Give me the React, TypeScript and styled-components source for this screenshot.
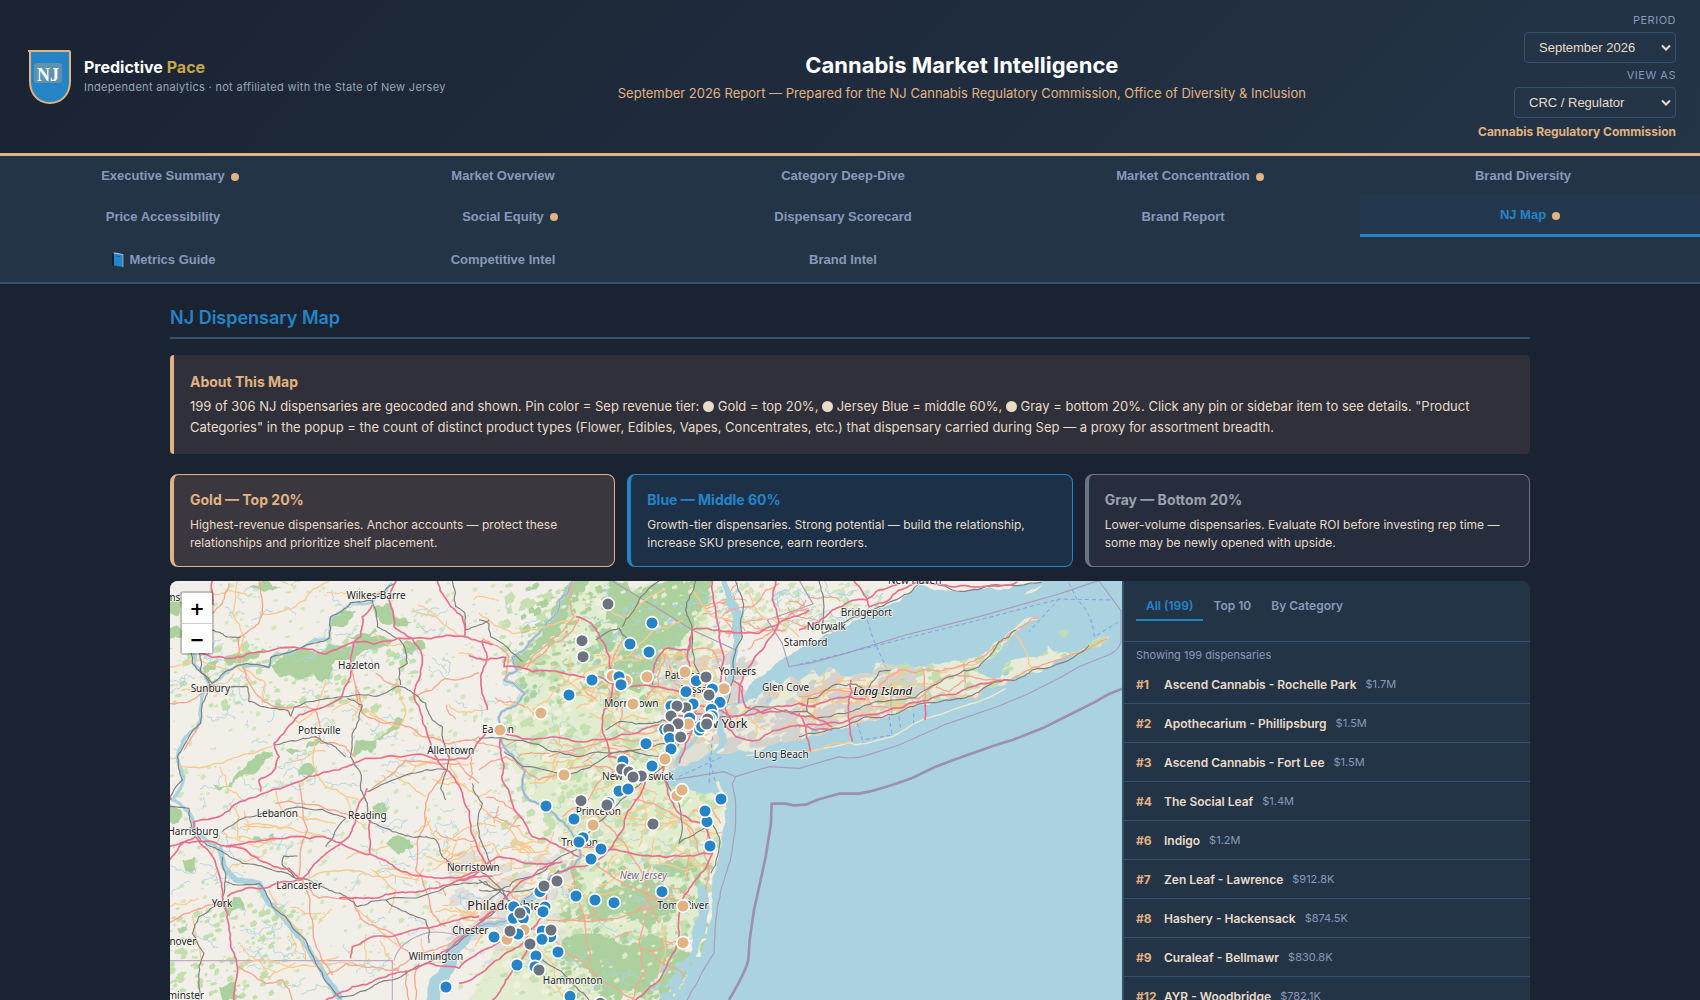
import React, { useState } from "react";
import styled, { createGlobalStyle } from "styled-components";

const c = {
  bg: "#1a2332",
  panel: "#243447",
  line: "#33526f",
  gold: "#e1b382",
  blue: "#2484c6",
  muted: "#8899b8",
  cream: "#e8dcc8",
  gray: "#6b7280",
};
const sans = `Inter, "Liberation Sans", sans-serif`;
const arial = `"Liberation Sans", Arial, sans-serif`;

const Global = createGlobalStyle`
  * { box-sizing: border-box; }
  body { margin: 0; background: ${c.bg}; color: ${c.cream}; font-family: ${sans}; }
  h1, h2, h3, p, ul { margin: 0; padding: 0; }
  button { border: 0; cursor: pointer; }
`;

const Page = styled.div`
  display: flex;
  flex-direction: column;
  height: 100vh;
  overflow: hidden;
`;

const Header = styled.header`
  display: flex;
  align-items: center;
  justify-content: space-between;
  padding: 12px 24px;
  border-bottom: 3px solid ${c.gold};
  background: linear-gradient(135deg, ${c.bg} 0%, ${c.panel} 100%);
`;
const Brand = styled.div`
  display: flex;
  align-items: center;
  gap: 12px;
`;
const BrandText = styled.div`
  padding-bottom: 2px;
`;
const Shield = styled.svg`
  width: 48px;
  height: 56px;
`;
const BrandName = styled.div`
  font-size: 16px;
  line-height: 22px;
  font-weight: 700;
  color: #fff;
  span { color: #c9a548; }
`;
const BrandNote = styled.div`
  font-size: 11px;
  line-height: 18px;
  letter-spacing: 0.3px;
  color: #9aa5b5;
`;
const Titles = styled.div`
  text-align: center;
`;
const Title = styled.h1`
  font-size: 22px;
  line-height: 32px;
  font-weight: 700;
  color: #fff;
`;
const Subtitle = styled.p`
  font-size: 13px;
  line-height: 24px;
  color: ${c.gold};
`;
const Filters = styled.div`
  display: flex;
  flex-direction: column;
  align-items: flex-end;
  gap: 4px;
`;
const FilterLabel = styled.label`
  font-size: 11px;
  line-height: 16px;
  letter-spacing: 0.5px;
  text-transform: uppercase;
  color: ${c.muted};
`;
const Select = styled.select`
  height: 31px;
  padding: 0 28px 0 14px;
  border: 1px solid ${c.line};
  border-radius: 4px;
  background: ${c.panel}
    url("data:image/svg+xml,%3Csvg xmlns='http://www.w3.org/2000/svg' width='10' height='8'%3E%3Cpath d='M1 1.5l4 4 4-4' fill='none' stroke='%23e8dcc8' stroke-width='2'/%3E%3C/svg%3E")
    no-repeat right 4px center;
  appearance: none;
  color: ${c.cream};
  font: 13px ${arial};
`;
const PeriodSelect = styled(Select)`
  width: 152px;
`;
const ViewSelect = styled(Select)`
  width: 162px;
`;
const Agency = styled.div`
  font-size: 12px;
  line-height: 19px;
  font-weight: 700;
  color: ${c.gold};
`;

const Nav = styled.nav`
  display: grid;
  grid-template-columns: repeat(5, 1fr);
  grid-template-rows: 39px 42px 45px;
  background: ${c.panel};
  border-bottom: 2px solid ${c.line};
`;
const NavTab = styled.button<{ $active?: boolean }>`
  display: flex;
  align-items: center;
  justify-content: center;
  gap: 6px;
  font: 700 13px ${arial};
  color: ${(p) => (p.$active ? c.blue : c.muted)};
  background: ${(p) => (p.$active ? "#23384f" : "transparent")};
  border-bottom: ${(p) => (p.$active ? `3px solid ${c.blue}` : "0")};
`;
const Dot = styled.i<{ $on: boolean }>`
  width: 8px;
  height: 8px;
  margin-top: 2px;
  border-radius: 50%;
  background: ${(p) => (p.$on ? c.gold : "transparent")};
`;

const Main = styled.main`
  flex: 1;
  min-height: 0;
  display: flex;
  flex-direction: column;
  width: 80%;
  margin: 0 auto;
  padding-top: 20px;
`;
const Heading = styled.h2`
  padding-bottom: 5px;
  border-bottom: 2px solid ${c.line};
  font-size: 18px;
  line-height: 28px;
  font-weight: 600;
  color: ${c.blue};
`;
const About = styled.section`
  margin-top: 16px;
  padding: 16px 20px 16px 16px;
  border-left: 4px solid ${c.gold};
  border-radius: 4px;
  background: #2f303a;
`;
const AboutText = styled.p`
  font-size: 13px;
  line-height: 21px;
  padding-top: 3px;
`;
const Disc = styled.i`
  display: inline-block;
  width: 11px;
  height: 11px;
  border-radius: 50%;
  vertical-align: -1px;
  background: ${c.cream};
`;
const CardTitle = styled.h3<{ $color: string }>`
  font-size: 14px;
  line-height: 22px;
  font-weight: 700;
  color: ${(p) => p.$color};
`;
const Tiers = styled.div`
  display: grid;
  grid-template-columns: repeat(3, 1fr);
  gap: 12px;
  margin: 20px 0 14px;
`;
const Tier = styled.section<{ $color: string; $bg: string }>`
  padding: 14px 16px;
  border: 1px solid ${(p) => p.$color};
  border-left-width: 4px;
  border-radius: 8px;
  background: ${(p) => p.$bg};
`;
const TierText = styled.p`
  padding-top: 5px;
  font-size: 12px;
  line-height: 18px;
`;

const MapCard = styled.div`
  flex: 1;
  min-height: 0;
  display: grid;
  grid-template-columns: 7fr 3fr;
  grid-template-rows: 100%;
  border-radius: 8px 8px 0 0;
  overflow: hidden;
`;
const MapPane = styled.div`
  position: relative;
  background: #aad3df;
`;
const MapSvg = styled.svg`
  display: block;
  width: 100%;
  height: 100%;
`;
const Zoom = styled.div`
  position: absolute;
  top: 10px;
  left: 10px;
  border: 2px solid rgba(0, 0, 0, 0.2);
  border-radius: 4px;
`;
const ZoomButton = styled.button`
  display: block;
  width: 30px;
  height: 30px;
  padding: 2px 0 0;
  background: #fff;
  color: #000;
  font: 700 18px/28px "DejaVu Sans", sans-serif;
  & + & { border-top: 1px solid #ccc; }
`;

const Side = styled.aside`
  border-left: 2px solid ${c.line};
  background: ${c.panel};
  overflow: hidden;
`;
const SideTabs = styled.div`
  display: flex;
  height: 61px;
  padding: 10px 12px 20px;
  border-bottom: 1px solid ${c.line};
`;
const SideTab = styled.button<{ $active?: boolean }>`
  padding: 0 10px;
  background: none;
  font: 600 12px ${sans};
  color: ${(p) => (p.$active ? c.blue : c.muted)};
  border-bottom: 2px solid ${(p) => (p.$active ? c.blue : "transparent")};
`;
const Count = styled.p`
  padding: 4px 12px 1px;
  font-size: 11px;
  line-height: 18px;
  color: ${c.muted};
`;
const List = styled.ul`
  list-style: none;
`;
const Item = styled.li`
  display: flex;
  align-items: center;
  height: 39px;
  padding: 0 12px;
  border-bottom: 1px solid ${c.line};
  font-size: 12px;
  font-weight: 600;
`;
const Rank = styled.span`
  min-width: 28px;
  font-weight: 700;
  color: ${c.gold};
`;
const Revenue = styled.span`
  margin-left: 9px;
  font-size: 11px;
  font-weight: 400;
  color: ${c.muted};
`;

/* ---------- map geometry ---------- */
type Pt = [number, number];

const random = (seed: number) => () => {
  seed = (seed * 16807) % 2147483647;
  return seed / 2147483647;
};

const parse = (s: string, dx = 0): Pt[] =>
  s.trim().split(/\s+/).map((p) => {
    const [x, y] = p.split(",").map(Number);
    return [x + dx, y];
  });

// Subdivides a polyline and nudges every new vertex so it reads as a surveyed line.
const rough = (pts: Pt[], seed: number, amp = 0.12, depth = 3): string => {
  const r = random(seed * 7919 + 13);
  let cur = pts;
  for (let d = 0; d < depth; d++) {
    const next: Pt[] = [cur[0]];
    for (let i = 1; i < cur.length; i++) {
      const [ax, ay] = cur[i - 1];
      const [bx, by] = cur[i];
      const k = (r() - 0.5) * 2 * amp;
      if (Math.hypot(bx - ax, by - ay) > 8)
        next.push([(ax + bx) / 2 - (by - ay) * k, (ay + by) / 2 + (bx - ax) * k]);
      next.push([bx, by]);
    }
    cur = next;
  }
  return "M" + cur.map(([x, y]) => `${Math.round(x)} ${Math.round(y)}`).join("L");
};

const W = -960; // western sheet offset
const E = 960; // eastern sheet offset

const coast =
  "1926,-20 1700,20 1690,40 1615,45 1560,60 1500,56 1460,66 1415,62 1360,58 1320,45 1290,70 1260,95 1200,115 1150,140 1110,165 1070,185 1020,208 990,225 960,238 930,258 900,272 880,292 850,318 812,345 798,372 775,395 745,402 728,430 715,480 720,520 700,548 650,560 600,590 565,615 552,632 590,655 640,662 700,668 728,690 738,720 730,790 718,860 700,925 700,1000 692,1060 680,1110 665,1160 622,1220 590,1290";
const sea = "L560 1600L2400 1600L2400 -20Z";
const longIsland =
  "728,445 750,405 790,400 835,385 862,355 880,330 905,345 935,318 960,335 1000,298 1020,322 1050,290 1085,318 1130,312 1180,315 1190,278 1260,285 1360,280 1400,276 1460,272 1505,255 1550,215 1600,180 1660,142 1680,146 1620,180 1582,215 1560,245 1495,290 1500,310 1560,325 1570,300 1590,275 1640,262 1700,250 1708,225 1725,245 1795,247 1840,212 1890,202 1870,222 1800,255 1720,285 1650,310 1580,342 1520,350 1490,385 1400,388 1330,405 1260,432 1160,452 1090,478 1020,498 960,512 900,515 850,540 800,545 745,552 712,548 745,515 735,485";
const staten = "618,545 645,520 680,520 690,545 650,575 615,590 595,585";

const motorways: Pt[][] = [
  parse("120,250 200,265 300,245 420,235 500,252 590,215 700,212 760,205 850,200 950,210 1000,225", W),
  parse("160,33 160,80 163,105", W),
  parse("712,33 690,90 705,170 760,205 790,260 780,330 765,380 790,440 815,520 850,590 910,670 935,780 970,860 990,900", W),
  parse("835,33 860,85 910,140 916,200", W),
  parse("640,105 610,140 605,200 585,215 575,260 575,320 545,385 470,418 420,435 345,520 360,560 350,595 300,630 305,665", W),
  parse("30,830 110,815 200,828 340,805 490,800 545,820 600,845 640,855 690,880 760,915 850,925 950,905 1010,890", W),
  parse("110,790 105,755 190,735 270,685 420,635 540,600 620,565 740,558 870,570 925,565 985,480", W),
  parse("110,800 170,880 190,960 205,1030 215,1130 235,1190 225,1290", W),
  parse("205,980 260,955 340,945 425,930 480,870 530,830 570,800 590,750 600,700 625,655", W),
  parse("200,830 250,835 300,870 390,895 420,925", W),
  parse("540,985 640,985 720,968 800,960 900,930 1000,918", W),
  parse("500,1290 580,1250 660,1225 740,1205 820,1170 880,1130 960,1060 1020,1010", W),
  parse("575,1165 580,1130 640,1100 760,1080 860,1060 960,1040", W),
  parse("810,1180 900,1195 1000,1130 1060,1080", W),
  parse("635,750 632,850", W), parse("970,210 985,260 965,320 985,420", W),
  parse("30,870 60,830 110,800", W), parse("30,650 35,690", W),
  parse("-30,255 20,270 80,262 75,290 160,305 270,315 350,318 440,345 520,350 600,365 640,400 700,420"),
  parse("75,490 190,505 290,515 390,508 470,490 540,465 590,440 680,430"),
  parse("290,140 350,175 380,230 392,290 400,360 375,420 372,490 390,560 440,575"),
  parse("520,345 535,265 560,235 630,240 640,180 700,180 755,185 840,190 900,160 990,120"),
  parse("620,440 600,500 560,560 550,610 500,625 480,680 440,740 400,830 330,885 240,905 200,960 190,1040 120,1130 40,1180 -60,1240"),
  parse("550,620 575,690 600,730 680,765 700,850 650,930 605,1000 600,1100 565,1180 530,1240 470,1290"),
  parse("300,830 390,840 480,855 560,862 640,858 700,852"),
  parse("60,480 65,540 68,620 100,700 160,800 240,830 300,860"),
  parse("640,180 625,260 640,330 655,400 640,460 620,520 600,580"),
  parse("720,420 760,440 810,435 860,420 960,400 1010,410"),
  parse("760,330 790,350 800,410 850,430 920,420 1000,440 1060,470"),
  parse("700,33 705,100 720,180 735,260 725,340 740,420 760,470"),
  parse("890,33 880,90 900,160 850,240 800,300 780,400"),
  parse("720,440 770,500 840,510 930,470 960,465 1060,480"),
  parse("0,1050 60,1000 120,940 200,890 230,880"),
  parse("-60,930 0,905 60,860 150,880 250,875"),
  parse("40,1290 80,1230 110,1180 150,1130 200,1085"),
  parse("0,402 50,405 110,385 150,380 200,388", E),
  parse("0,470 60,465 120,460 200,435 270,420 330,400 440,375 520,350 560,340 600,332 640,330", E),
  parse("155,330 150,400 152,470 160,515", E), parse("0,430 20,480 35,545", E), parse("375,395 378,450", E),
  parse("0,180 60,155 100,120 150,95 200,90 240,60 330,33", E),
  parse("165,33 200,80 210,110 270,90 300,60 350,38 440,45 560,48 655,36", E),
];
const trunks: Pt[][] = [
  parse("300,33 310,100 300,160 240,200 230,270", W), parse("210,40 190,100 160,130", W),
  parse("580,300 600,370 610,430 660,455 740,470 790,500 860,520 960,500", W),
  parse("250,290 290,370 350,410 470,420 485,520 560,530 590,560", W),
  parse("590,345 610,420", W), parse("650,310 720,350", W), parse("765,380 860,325 960,308", W),
  parse("420,640 420,920", W), parse("350,700 430,700 520,720 580,740", W),
  parse("430,930 460,1050 495,1180 520,1215", W), parse("420,940 480,985 580,985 610,1050 700,1090 760,1160", W),
  parse("30,1060 110,1020 190,1000", W), parse("235,1190 320,1240 370,1230 400,1290", W),
  parse("630,665 690,620 740,570 800,575 900,580 960,640", W), parse("780,800 770,900 800,960 820,1030 860,1070", W),
  parse("30,400 90,395 160,340", W), parse("120,470 75,540", W), parse("860,600 800,700 780,800", W),
  parse("700,1200 760,1160 820,1140 900,1100", W), parse("740,1200 750,1290", W), parse("780,1180 770,1290", W),
  parse("500,1215 560,1180 640,1190 720,1200", W),
  parse("280,33 285,140 230,200 160,260 140,300"), parse("300,140 250,210 180,260 100,290"),
  parse("0,600 80,560 180,630 260,600 370,590 450,610"), parse("250,740 320,700 380,620 420,600"),
  parse("430,410 420,470 480,490 560,470"), parse("210,560 280,540 420,505 540,510"),
  parse("330,720 400,780 450,850 500,930 510,1000 540,1060"), parse("300,850 400,920 480,960 600,990"),
  parse("200,1050 320,1055 400,1045 510,1015 560,1000"), parse("280,870 290,980 320,1100 330,1180"),
  parse("510,1015 480,1120 500,1200 460,1290"), parse("210,1090 280,1160 380,1240 470,1290"),
  parse("510,1140 560,1185 620,1222"), parse("640,720 700,720 725,760"), parse("690,740 690,900 680,960"),
  parse("560,250 540,340 500,400"), parse("430,210 400,300 420,380"), parse("640,240 700,240 720,280"),
  parse("740,130 820,110 860,60 900,40"), parse("10,205 90,260 80,330"), parse("460,690 560,720 640,780 660,850"),
  parse("240,345 300,300 400,300 460,295 500,285 545,265 590,225 640,185 700,145 720,145", E),
  parse("240,350 300,375 360,385 400,350 450,315 540,325 600,332", E),
  parse("370,295 375,395", E), parse("495,278 500,340", E), parse("640,325 690,300 760,275 840,250 925,205", E),
  parse("180,345 220,410 280,420", E), parse("278,340 278,430", E), parse("410,350 450,365 500,330", E),
  parse("0,380 60,370 150,365 250,370", E),
];
const secondary: Pt[][] = [
  parse("235,33 220,130 255,200 230,290 280,340", W), parse("510,33 460,60 440,90 350,130 300,130", W),
  parse("30,290 120,270 200,300", W), parse("500,330 480,400 420,460 380,420", W), parse("260,300 320,340 310,400", W),
  parse("760,120 830,140 900,200", W), parse("715,330 740,420 720,470 630,430", W), parse("470,500 470,600 500,650 560,680 600,690", W),
  parse("60,590 180,580 240,560 340,530", W), parse("350,660 370,720 440,750 530,760", W), parse("210,700 240,740 235,800 350,810", W),
  parse("250,770 330,765 460,790 500,800", W), parse("430,930 560,900 640,920 760,925", W), parse("330,960 360,1030 430,1080 440,1170", W),
  parse("100,1040 110,1100 130,1190", W), parse("240,1180 330,1170 470,1190 540,1160", W), parse("590,1010 660,1080 720,1130", W),
  parse("640,900 710,960 690,1030", W), parse("680,600 750,640 800,680", W), parse("870,570 900,640 960,680 1000,660", W),
  parse("860,820 900,790 960,760 1010,770", W), parse("800,860 870,880 940,830 1000,820", W), parse("820,900 880,850 900,800", W),
  parse("0,130 100,190 180,180 300,150", 0), parse("160,420 240,350 330,300 420,260"), parse("220,280 300,360 420,380"),
  parse("370,470 300,560 240,620 150,640"), parse("400,560 480,540 560,520"), parse("300,750 420,740 540,760 640,750"),
  parse("470,640 500,720 480,830"), parse("230,930 320,980 430,960"), parse("540,880 620,900 700,880"),
  parse("130,1090 220,1180 250,1280"), parse("550,1060 560,1140 540,1210"), parse("390,120 440,150 500,90 560,60"),
  parse("440,260 520,180 610,150"), parse("640,60 700,140 760,150"), parse("800,60 850,140 960,200"), parse("0,700 70,760 170,850"),
  parse("0,350 70,365 160,355 240,345 340,350 420,345", E), parse("0,440 100,440 230,430 330,415", E),
  parse("20,545 100,520 160,512", E), parse("60,380 120,330 200,330", E), parse("640,190 680,240 690,285 720,295", E),
  parse("440,380 530,385 560,340", E), parse("300,290 290,330 300,420", E), parse("40,390 50,470", E), parse("100,385 95,470", E),
  parse("200,360 210,450", E), parse("420,310 500,285 560,270", E), parse("0,420 30,380 90,370", E),
];
const rails: Pt[][] = [
  parse("105,215 100,280 160,340 240,285 330,292 335,262 440,225 510,205 515,140 575,98 640,90 710,40", W),
  parse("120,250 125,305 155,345 265,350 270,395 340,415 385,420 395,438 405,412 560,380", W),
  parse("560,380 640,378 720,348 740,355 800,400 820,450 850,470 870,560 865,600 845,655 860,690", W),
  parse("640,90 655,170 720,205 745,280 720,295 725,345", W),
  parse("880,33 890,110 918,130 920,180 960,165 990,150", W),
  parse("565,385 610,405 600,450 580,490 575,560 605,610 605,660 625,700 625,745 700,785 780,800 825,805 850,860 890,900", W),
  parse("345,525 420,510 470,500 520,525 560,560", W), parse("625,665 740,615 865,600", W),
  parse("30,710 90,715 100,780 130,815 190,845 250,880 340,900 410,925 500,955 545,970 595,1010 680,990 860,950 930,940 980,935 1010,960", W),
  parse("190,785 240,750 330,730 410,712 490,718 560,745", W), parse("410,925 370,885 375,858 415,858", W),
  parse("560,745 500,830", W), parse("190,860 200,920 190,1000 120,1040 100,1090 135,1150 120,1230 120,1290", W),
  parse("545,1280 640,1250 700,1230 800,1180 870,1140 960,1060 1040,980", W),
  parse("680,990 740,1025 800,1050 810,1120", W), parse("200,935 300,940 340,1010 380,1040 440,1110 470,1180 545,1285", W),
  parse("940,640 970,700 960,800 1000,900", W), parse("160,180 200,200 245,202", W),
  parse("30,690 70,630 55,560 90,500 125,460 130,400 155,345", W),
  parse("0,150 30,160 35,200 130,275"), parse("75,545 130,590 280,610 380,560 470,540 560,520"),
  parse("0,505 100,510 220,545 300,560 420,545 560,560"), parse("30,990 110,930 200,900 300,830 380,740 440,680 540,600 600,520 700,450"),
  parse("0,900 70,960 110,1040 90,1100"), parse("350,210 380,190 420,175 460,230"), parse("380,480 420,455 520,460 580,450"),
  parse("650,33 620,120 640,180 645,280 700,380 700,460"), parse("555,620 600,700 600,820 650,790 700,760 720,800 695,910"),
  parse("770,33 790,90 790,200 765,300 745,400"), parse("540,33 480,90 430,170"),
  parse("0,960 60,960 80,985 120,1010"), parse("0,930 90,965 150,960 240,900"), parse("150,1100 180,1160 280,1240 330,1290"),
  parse("700,450 760,440 830,410 900,420 980,425"),
  parse("0,425 25,425 50,445 120,430 200,405 280,390 350,382 450,320 540,290 600,215 650,180", E),
  parse("0,500 60,488 120,475 200,440 290,432 360,402 440,390 530,370 600,335 650,330 700,300 840,250 870,225", E),
  parse("25,425 28,385 60,380 120,342 170,342 200,365 240,305 275,300", E),
  parse("60,33 75,110 70,190 130,160 180,140 240,110 300,85 360,40 460,60 560,50 690,40 730,36", E),
];
const delaware: Pt[] = parse("280,35 240,90 235,130 180,190 150,215 100,262 115,300 75,330 138,370 100,410 65,432 60,480 75,530 110,570 138,600 140,680 190,705 240,750 285,800 305,860 255,900 190,955 120,1005 100,1045 50,1062 0,1068 -40,1095");
const susquehanna: Pt[] = parse("108,250 105,285 152,342 130,375 125,450 80,500 55,560 75,620 40,690 92,730 112,790 180,840 195,890 230,930 300,940 330,1000 380,1050 430,1110 460,1160 500,1220 545,1290", W);
const northBranch: Pt[] = parse("152,342 240,285 330,292 338,262 440,228 512,205 515,145 575,100 640,95 700,40", W);

const forests: Pt[][] = [
  parse("130,295 260,245 330,240 240,280 140,310", W), parse("335,285 390,240 470,250 560,230 640,200 700,210 620,240 530,270 520,300 490,340 460,310 400,320 350,310", W),
  parse("510,150 560,120 600,115 570,150 515,170", W), parse("640,110 700,100 710,140 760,155 720,170 650,140", W),
  parse("735,215 790,210 800,235 760,255 730,240", W), parse("270,50 320,33 370,50 340,62 300,58", W),
  parse("590,510 720,440 735,450 690,490 650,510 640,550 580,560", W), parse("160,640 260,590 340,545 345,560 250,620 175,660", W),
  parse("380,540 480,500 485,515 400,555", W), parse("415,600 460,585 470,600 420,620", W),
  parse("680,820 730,800 765,830 720,855", W), parse("640,710 680,700 685,720 650,740", W),
  parse("30,700 70,740 50,760 30,755", W), parse("30,175 60,170 70,200 30,205", W), parse("30,90 70,100 60,135 30,130", W),
  parse("190,1010 240,980 260,1020 210,1040", W), parse("180,1250 230,1240 250,1290 190,1290", W),
  parse("560,200 650,175 655,185 590,210", W), parse("350,400 440,380 420,400 355,412", W), parse("55,1075 85,1060 88,1080 60,1090", W),
  parse("70,870 105,860 110,900 80,905", W), parse("270,805 340,790 345,805 290,815", W), parse("360,33 430,33 400,48", W),
  parse("100,255 190,195 250,90 285,33 330,33 300,90 260,150 190,220 110,300"),
  parse("390,33 560,33 640,45 620,110 640,180 610,230 560,240 540,300 460,320 400,310 430,200 380,150"),
  parse("620,33 700,33 690,90 630,150 615,110"), parse("430,350 500,300 540,320 480,370"),
  parse("350,200 395,170 400,240 370,260"), parse("320,990 420,950 480,930 560,960 590,1020 510,1080 450,1040 340,1060"),
  parse("250,1110 330,1090 420,1120 500,1090 560,1110 590,1150 540,1210 500,1290 370,1290 330,1200 240,1160"),
  parse("600,1140 660,1160 640,1200 590,1250 540,1290 530,1250"), parse("520,890 600,870 640,900 560,920"),
  parse("320,298 370,298 370,330 322,335", E), parse("440,335 520,330 545,345 480,365 430,355", E),
  parse("630,280 690,265 720,285 680,305 620,325", E), parse("720,230 745,225 760,250 730,262", E),
  parse("210,410 235,408 235,430 215,430", E),
];
const gardinersIsland = parse("775,180 805,178 800,215 788,200", E);

type Label = [string, number, number, number?];
const labels: Label[] = [
  ["Wilkes-Barre", 651 + W, 87], ["Hazleton", 600 + W, 298], ["Sunbury", 154 + W, 367],
  ["Pottsville", 481 + W, 493], ["Allentown", 875 + W, 553], ["Lebanon", 355 + W, 740],
  ["Reading", 625 + W, 746], ["Harrisburg", 102 + W, 795], ["Norristown", 943 + W, 902],
  ["Lancaster", 420 + W, 957], ["York", 189 + W, 1011], ["Chester", 934 + W, 1092],
  ["Wilmington", 831 + W, 1171], ["Hanover", 52 + W, 1126], ["Westminster", 46 + W, 1286],
  ["Williams", 5 + W, 93], ["Easton", 57, 489], ["Morristown", 457, 412], ["Paterson", 620, 326],
  ["Passaic", 655, 370], ["Yonkers", 775, 315], ["Stamford", 980, 228], ["Glen Cove", 920, 364],
  ["New York", 722, 475, 38], ["Long Beach", 907, 564], ["New Brunswick", 477, 631], ["Princeton", 358, 734],
  ["Trenton", 302, 827], ["Philadelphia", 75, 1021, 38], ["Toms River", 612, 1018], ["Hammonton", 281, 1243],
  ["Norwalk", 82 + E, 181], ["Bridgeport", 202 + E, 137], ["New Haven", 347 + E, 42],
];

// tier letter then x,y, in drawing order: g = gold, b = blue, s = slate
const pins =
  "s387,102 b519,159 s309,212 b453,222 b510,246 s312,260 g400,318 g440,332 b420,320 b426,344 b339,330 g504,321 g618,306 b270,375 g186,429 g63,480 g462,402 b652,332 s681,321 b621,365 g735,356 b700,357 s690,375 b723,397 b576,408 b642,402 b697,418 s620,413 s594,408 b632,444 s576,438 g628,462 b557,478 b700,438 b692,445 b662,480 b668,470 s686,447 s683,462 s597,461 s569,478 b572,505 s605,501 b501,521 b576,537 g558,567 b432,573 b519,588 s428,597 s450,606 s470,618 s487,618 s462,621 g255,615 b420,663 b447,657 g594,677 g609,660 b726,687 b684,755 b678,723 s306,692 b390,698 s384,705 b201,708 b285,747 g342,765 s522,762 b312,803 b300,816 b366,837 b336,867 b693,828 s234,933 b183,965 s195,948 b549,965 b291,978 b348,990 b405,998 g612,1008 g612,1118 b104,1010 b137,1025 b198,1011 b192,1025 b103,1045 b133,1045 s123,1029 g135,1080 g84,1108 b117,1092 s93,1083 b45,1101 b190,1083 b215,1100 s216,1080 b189,1108 s153,1122 b237,1146 b171,1158 b114,1185 b168,1190 s180,1200 b273,1279 s364,1300 b-99,1251"
    .split(" ")
    .map((t) => {
      const [x, y] = t.slice(1).split(",").map(Number);
      return { fill: { g: c.gold, b: c.blue, s: c.gray }[t[0]]!, x, y };
    });

const scatter = (seed: number, n: number, x0: number, x1: number, y0: number, y1: number, size: number) => {
  const r = random(seed);
  let d = "";
  for (let i = 0; i < n; i++) {
    const x = x0 + r() * (x1 - x0);
    const y = y0 + r() * (y1 - y0);
    const w = size * (0.4 + r());
    const h = w * (0.3 + r() * 0.5);
    d += `M${x.toFixed(0)} ${y.toFixed(0)}l${w.toFixed(0)} ${(-h).toFixed(0)}l${(w / 2).toFixed(0)} ${h.toFixed(0)}l${(-w / 3).toFixed(0)} ${h.toFixed(0)}l${(-w).toFixed(0)} ${(h / 3).toFixed(0)}z`;
  }
  return d;
};
// Short wandering lines: streams or local roads, depending on the stroke.
const strands = (
  seed: number, n: number, x0: number, x1: number, y0: number, y1: number, length = 50, amp = 0.35
) => {
  const r = random(seed);
  let d = "";
  for (let i = 0; i < n; i++) {
    const x = x0 + r() * (x1 - x0);
    const y = y0 + r() * (y1 - y0);
    const a = r() * 6.28;
    const len = length * (1 + r() * 1.6);
    d += rough([[x, y], [x + Math.cos(a) * len, y + Math.sin(a) * len * 0.6]], seed + i, amp, 4);
  }
  return d;
};

function Roads({ paths, color, width, seed, amp = 0.1 }: { paths: Pt[][]; color: string; width: number; seed: number; amp?: number }) {
  return (
    <path
      d={paths.map((p, i) => rough(p, seed + i, amp)).join("")}
      fill="none" stroke={color} strokeWidth={width} strokeLinejoin="round"
    />
  );
}

function DispensaryMap() {
  const coastPath = rough(parse(coast), 3, 0.1) + sea;
  const islandPath = rough(parse(longIsland), 5, 0.14) + "Z";
  return (
    <MapSvg viewBox="-927 33 2856 1257" preserveAspectRatio="xMinYMin slice" role="img" aria-label="Map of New Jersey dispensaries">
      <defs>
        <clipPath id="island"><path d={islandPath} /></clipPath>
      </defs>
      <rect x="-940" y="0" width="3000" height="1700" fill="#f2efe9" />
      <path d={rough(parse("100,270 250,80 300,20 640,20 700,200 730,400 600,580 560,620 740,700 690,1000 590,1320 -60,1320 60,1080 130,1000 300,860 130,650 60,480 130,370"), 8) + "Z"} fill="#e2ecce" />
      <path d={scatter(11, 900, 60, 700, 40, 1280, 16)} fill="#c6e0b2" />
      <path d={scatter(12, 420, 60, 720, 40, 1280, 15)} fill="#f1efde" />
      <path d={scatter(14, 700, -930, 60, 40, 1280, 8)} fill="#d2e6bd" />
      <path d={scatter(13, 140, -930, -560, 1000, 1280, 11)} fill="#c3dfae" />
      <path d={scatter(24, 120, -930, -200, 200, 420, 14)} fill="#c3dfae" />
      <path d={scatter(15, 200, 700, 1200, 40, 190, 10)} fill="#cfe5bb" />
      <path d={scatter(16, 110, -100, 250, 840, 1180, 22)} fill="#dfdedb" />
      <path d={scatter(17, 190, 540, 800, 240, 600, 20)} fill="#d6d5d2" />
      <path d={forests.map((p, i) => rough(p, 40 + i, 0.24, 4) + "Z").join("")} fill="#add19e" />
      <path d={scatter(18, 260, 240, 680, 880, 1290, 13)} fill="#add19e" />
      <path d={scatter(19, 260, 120, 640, 40, 400, 13)} fill="#add19e" />
      <path d={scatter(22, 110, 240, 640, 40, 400, 9)} fill="#e4ecd0" />
      <path d={scatter(23, 80, 250, 640, 900, 1280, 9)} fill="#dfeacb" />
      <path d={strands(21, 150, -920, 20, 60, 1260, 40)} fill="none" stroke="#aad3df" strokeWidth="2.5" />
      <path d={strands(27, 120, 60, 640, 60, 1260, 35)} fill="none" stroke="#aad3df" strokeWidth="2.5" />
      <path d={strands(26, 30, 700, 1150, 40, 160, 30)} fill="none" stroke="#aad3df" strokeWidth="3" />
      <path d={scatter(29, 60, 340, 720, 60, 330, 8)} fill="#aad3df" />
      <path d={strands(61, 60, 540, 740, 240, 540, 30, 0.15)} fill="none" stroke="#fbc98c" strokeWidth="4" />
      <path d={strands(62, 70, -120, 220, 800, 1160, 35, 0.15)} fill="none" stroke="#fbc98c" strokeWidth="4" />
      <path d={strands(63, 60, 180, 680, 260, 900, 60, 0.15)} fill="none" stroke="#fbc98c" strokeWidth="4" />
      <path d={strands(64, 45, -900, 0, 60, 1240, 70, 0.18)} fill="none" stroke="#fbc98c" strokeWidth="3.5" />
      <path d={strands(65, 24, 720, 1050, 60, 210, 45, 0.15)} fill="none" stroke="#fba58c" strokeWidth="3.5" />
      <path d={strands(66, 36, -100, 640, 300, 1150, 50, 0.15)} fill="none" stroke="#fba58c" strokeWidth="3.5" />

      <path d={coastPath} fill="#aad3df" />
      <path d={islandPath} fill="#e9ebd9" />
      <g clipPath="url(#island)">
        <path d={scatter(31, 300, 720, 1330, 280, 560, 22)} fill="#d3d2cf" />
        <path d={scatter(32, 170, 1180, 1860, 180, 440, 16)} fill="#c2deae" />
        <path d={scatter(34, 30, 860, 1800, 270, 520, 12)} fill="#aad3df" />
        <path d={strands(67, 70, 730, 1300, 300, 530, 30, 0.12)} fill="none" stroke="#fbc98c" strokeWidth="4" />
      </g>
      <path d={rough(parse(staten), 6) + "Z"} fill="#dfe0d3" />
      <path d={rough(parse("970,508 1040,512 1120,500 1250,470 1330,445 1260,485 1130,525 1000,550 960,552"), 7) + "Z"} fill="#aad3df" />
      <path d={rough(parse("800,556 900,545 990,545 1110,518 1130,525 1240,500 1340,445 1400,428 1500,395 1580,355"), 9, 0.03)} fill="none" stroke="#f0ead0" strokeWidth="4" />
      <path d={rough(parse("715,635 722,655 735,680 738,720"), 9, 0.03)} fill="none" stroke="#f0ead0" strokeWidth="9" />
      <path d={rough(parse("655,940 680,945 690,1000 672,1100 650,1160 610,1215 575,1290 560,1290 600,1215 640,1140 640,1080 660,1030"), 15) + "Z"} fill="#aad3df" />
      <path d={scatter(36, 34, 520, 640, 1160, 1290, 16)} fill="#aad3df" />
      <path d={rough(parse("1635,73 1680,50 1695,42 1660,68"), 4) + "Z"} fill="#e9ebd9" />
      <path d={rough(gardinersIsland, 77, 0.2) + "Z"} fill="#c2deae" />

      <g fill="none" stroke="#aad3df" strokeLinejoin="round">
        <path d={rough(delaware, 50, 0.15)} strokeWidth="9" />
        <path d={rough(parse("190,955 120,1005 100,1045 50,1062 0,1068 -40,1095"), 51)} strokeWidth="18" />
        <path d={rough(parse("-40,1095 -80,1140 -90,1190 -130,1235 -140,1300"), 52)} strokeWidth="38" />
        <path d={rough(susquehanna, 53, 0.1)} strokeWidth="10" />
        <path d={rough(parse("180,830 195,890 230,930 300,940 330,1000 380,1050 430,1110 460,1160 500,1220 545,1290", W), 54, 0.05)} strokeWidth="17" />
        <path d={rough(northBranch, 55, 0.1)} strokeWidth="8" />
        <path d={rough(parse("735,33 750,80 775,125 778,200 765,260 752,330 732,400 715,460"), 56, 0.05)} strokeWidth="16" />
        <path d={rough(parse("748,85 775,130 778,205"), 56, 0.05)} strokeWidth="28" />
        <path d={rough(parse("690,420 675,480 640,520 610,540 590,590"), 57)} strokeWidth="11" />
      </g>

      <g fill="none" stroke="#a99cb8" strokeWidth="3.5">
        <path d="M-930 1172H-260V1290M-255 1172Q-240 1110 -150 1087Q-90 1082 -50 1105" stroke="#c0a9c4" />
        <path d={rough(delaware, 50, 0.15)} strokeWidth="3" />
        <path d="M400 33L560 130L640 180L770 240M910 220L930 290L1000 278L1100 250L1280 195L1500 140L1740 72L1770 62L1840 38L1860 33L1926 122V215Q1920 240 1895 252L1800 290L1740 325L1640 375L1560 408L1400 463L1260 525L1150 560Q1110 568 1080 560L1030 575L960 595L870 590L770 620L735 605L590 628M910 220L865 150L1002 102L962 33" />
        <path d={rough(parse("770,620 760,640 770,720 765,800 745,900 715,1010 705,1150 640,1260 620,1300"), 2, 0.04)} />
      </g>
      <path
        d="M1930 356L1890 372L1850 395L1770 435L1690 475L1600 510L1560 522L1450 560L1370 590L1300 624L1230 648L1170 665L1140 671H1080L1020 688L980 704L945 706L920 701H878L876 760L860 860L845 930L825 1020L812 1110L808 1170Q800 1205 750 1290"
        fill="none" stroke="#9d8fb0" strokeWidth="8" strokeLinejoin="round"
      />
      <path
        d="M960 283L1200 225L1500 150L1740 87L1900 90M1165 150L1180 200L1220 290M1770 40L1795 90Q1840 130 1846 200L1920 155M1740 87L1650 185M690 560L710 640M600 620L730 560M700 500L690 640M1135 460L1150 510L1240 495L1230 440M1260 440L1265 480M1304 430V460M740 320L730 400M830 390L800 420"
        fill="none" stroke="#7d8df0" strokeWidth="3" strokeDasharray="12 9" opacity="0.8"
      />

      <Roads paths={secondary} color="#fbc98c" width={4} seed={200} />
      <Roads paths={trunks} color="#fba58c" width={4} seed={300} />
      <Roads paths={rails} color="#808080" width={3.5} seed={500} amp={0.09} />
      <Roads paths={motorways} color="#e8708c" width={5} seed={400} amp={0.09} />

      <g
        fontFamily='"Noto Sans", sans-serif' textAnchor="middle" fill="#222" stroke="#fff"
        strokeOpacity="0.75" strokeWidth="5" strokeLinejoin="round" paintOrder="stroke"
      >
        {labels.map(([t, x, y, size = 30]) => (
          <text key={t} x={x} y={y} fontSize={size}>{t}</text>
        ))}
        <text x={251 + E} y="375" fontSize="34" fontStyle="italic" fill="#000">Long Island</text>
        <text x="493" y="926" fontSize="30" fontStyle="italic" fill="#80668a">New Jersey</text>
      </g>

      {pins.map((p, i) => (
        <circle key={i} cx={p.x} cy={p.y} r="19" fill={p.fill} stroke="#fff" strokeWidth="5" />
      ))}
    </MapSvg>
  );
}

function Book() {
  return (
    <svg width="13" height="16" viewBox="0 0 13 16" aria-hidden="true">
      <path d="M1 1L3 0.5V13.5L1 13z" fill="#14202e" />
      <path d="M3 1L12 2.5V15L3 13.5z" fill="#1f86d0" />
      <path d="M11 2.4L12.5 2.8V15L11 14.8z" fill="#7c8fa6" />
      <path d="M1.5 1L4 0.5L12.5 2.2L12 3L3 1.6z" fill="#b7c9dc" />
      <path d="M5 4L9 4.7" stroke="#125a96" strokeWidth="1" />
    </svg>
  );
}

function Logo() {
  return (
    <Shield viewBox="0 0 48 56" role="img" aria-label="NJ shield">
      <path d="M6 2H45Q46 2 46 3V32C46 45 38 54 26 54S6 45 6 32Z" fill={c.blue} stroke={c.gold} strokeWidth="2" />
      <path d="M4 2H10" stroke={c.gold} strokeWidth="2" />
      <rect x="10" y="14" width="28" height="20" rx="3" fill={c.gold} fillOpacity="0.3" />
      <text x="24" y="32" textAnchor="middle" fontFamily='"Liberation Serif", serif' fontWeight="700" fontSize="18" fill="#fff">NJ</text>
    </Shield>
  );
}

const tabs: [string, boolean?][] = [
  ["Executive Summary", true], ["Market Overview"], ["Category Deep-Dive"], ["Market Concentration", true], ["Brand Diversity"],
  ["Price Accessibility"], ["Social Equity", true], ["Dispensary Scorecard"], ["Brand Report"], ["NJ Map", true],
  ["Metrics Guide"], ["Competitive Intel"], ["Brand Intel"],
];
const dispensaries: [number, string, string][] = [
  [1, "Ascend Cannabis - Rochelle Park", "$1.7M"],
  [2, "Apothecarium - Phillipsburg", "$1.5M"],
  [3, "Ascend Cannabis - Fort Lee", "$1.5M"],
  [4, "The Social Leaf", "$1.4M"],
  [6, "Indigo", "$1.2M"],
  [7, "Zen Leaf - Lawrence", "$912.8K"],
  [8, "Hashery - Hackensack", "$874.5K"],
  [9, "Curaleaf - Bellmawr", "$830.8K"],
  [12, "AYR - Woodbridge", "$782.1K"],
];

export default function App() {
  const [tab, setTab] = useState("NJ Map");
  const [list, setList] = useState("All (199)");
  return (
    <>
      <Global />
      <Page>
        <Header>
          <Brand>
            <Logo />
            <BrandText>
              <BrandName>Predictive <span>Pace</span></BrandName>
              <BrandNote>Independent analytics · not affiliated with the State of New Jersey</BrandNote>
            </BrandText>
          </Brand>
          <Titles>
            <Title>Cannabis Market Intelligence</Title>
            <Subtitle>September 2026 Report — Prepared for the NJ Cannabis Regulatory Commission, Office of Diversity &amp; Inclusion</Subtitle>
          </Titles>
          <Filters>
            <FilterLabel htmlFor="period">Period</FilterLabel>
            <PeriodSelect id="period"><option>September 2026</option></PeriodSelect>
            <FilterLabel htmlFor="view">View as</FilterLabel>
            <ViewSelect id="view"><option>CRC / Regulator</option></ViewSelect>
            <Agency>Cannabis Regulatory Commission</Agency>
          </Filters>
        </Header>
        <Nav>
          {tabs.map(([name, dot]) => (
            <NavTab key={name} $active={name === tab} onClick={() => setTab(name)}>
              {name === "Metrics Guide" && <Book />}
              {name}
              <Dot $on={!!dot} />
            </NavTab>
          ))}
        </Nav>
        <Main>
          <Heading>NJ Dispensary Map</Heading>
          <About>
            <CardTitle $color={c.gold}>About This Map</CardTitle>
            <AboutText>
              199 of 306 NJ dispensaries are geocoded and shown. Pin color = Sep revenue tier: <Disc /> Gold = top 20%,{" "}
              <Disc /> Jersey Blue = middle 60%, <Disc /> Gray = bottom 20%. Click any pin or sidebar item to see details.
              "Product Categories" in the popup = the count of distinct product types (Flower, Edibles, Vapes,
              Concentrates, etc.) that dispensary carried during Sep — a proxy for assortment breadth.
            </AboutText>
          </About>
          <Tiers>
            <Tier $color={c.gold} $bg="#3a373e">
              <CardTitle $color={c.gold}>Gold — Top 20%</CardTitle>
              <TierText>Highest-revenue dispensaries. Anchor accounts — protect these relationships and prioritize shelf placement.</TierText>
            </Tier>
            <Tier $color={c.blue} $bg="#1c3148">
              <CardTitle $color={c.blue}>Blue — Middle 60%</CardTitle>
              <TierText>Growth-tier dispensaries. Strong potential — build the relationship, increase SKU presence, earn reorders.</TierText>
            </Tier>
            <Tier $color={c.gray} $bg="#262d3d">
              <CardTitle $color="#9ca3af">Gray — Bottom 20%</CardTitle>
              <TierText>Lower-volume dispensaries. Evaluate ROI before investing rep time — some may be newly opened with upside.</TierText>
            </Tier>
          </Tiers>
          <MapCard>
            <MapPane>
              <DispensaryMap />
              <Zoom>
                <ZoomButton aria-label="Zoom in">+</ZoomButton>
                <ZoomButton aria-label="Zoom out">−</ZoomButton>
              </Zoom>
            </MapPane>
            <Side>
              <SideTabs>
                {["All (199)", "Top 10", "By Category"].map((t) => (
                  <SideTab key={t} $active={t === list} onClick={() => setList(t)}>{t}</SideTab>
                ))}
              </SideTabs>
              <Count>Showing 199 dispensaries</Count>
              <List>
                {dispensaries.map(([rank, name, revenue]) => (
                  <Item key={rank}>
                    <Rank>#{rank}</Rank>
                    {name}
                    <Revenue>{revenue}</Revenue>
                  </Item>
                ))}
              </List>
            </Side>
          </MapCard>
        </Main>
      </Page>
    </>
  );
}
